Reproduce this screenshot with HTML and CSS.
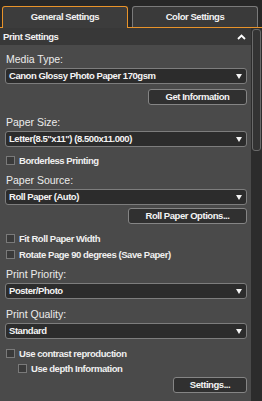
FILE: index.html
```html
<!DOCTYPE html>
<html>
    <head>
        <meta charset="utf-8">
        <title>Print Settings</title>
        <link rel="stylesheet" href="styles.css">
    </head>
    <body>
        <div class="tabs">
            <div class="tab active">General Settings</div>
            <div class="tab">Color Settings</div>
        </div>
        <div class="main">
            <div class="panel">
                <div class="section_head">
                    <span>Print Settings</span>
                    <svg class="chevron" width="9" height="6" viewBox="0 0 9 6"><path d="M1 5 L4.5 1.5 L8 5" fill="none" stroke="#fff" stroke-width="1.8"/></svg>
                </div>
                <div class="content">
                    <div class="label">Media Type:</div>
                    <div class="select">Canon Glossy Photo Paper 170gsm<span class="arrow"></span></div>
                    <div class="btn_row mt5"><div class="btn w99">Get Information</div></div>

                    <div class="label mt11">Paper Size:</div>
                    <div class="select">Letter(8.5"x11") (8.500x11.000)<span class="arrow"></span></div>
                    <div class="check mt7"><span class="box"></span>Borderless Printing</div>

                    <div class="label">Paper Source:</div>
                    <div class="select">Roll Paper (Auto)<span class="arrow"></span></div>
                    <div class="btn_row mt3"><div class="btn w119">Roll Paper Options...</div></div>
                    <div class="check"><span class="box"></span>Fit Roll Paper Width</div>
                    <div class="check mt4"><span class="box"></span>Rotate Page 90 degrees (Save Paper)</div>

                    <div class="label">Print Priority:</div>
                    <div class="select">Poster/Photo<span class="arrow"></span></div>

                    <div class="label mt9">Print Quality:</div>
                    <div class="select">Standard<span class="arrow"></span></div>
                    <div class="check"><span class="box"></span>Use contrast reproduction</div>
                    <div class="check mt3 indent"><span class="box"></span>Use depth Information</div>
                    <div class="btn_row mt3"><div class="btn w74">Settings...</div></div>
                </div>
            </div>
            <div class="scrollbar"><div class="thumb"></div></div>
        </div>
    </body>
</html>
```

FILE: styles.css
```css
body {
    margin: 0;
    width: 262px;
    height: 401px;
    overflow: hidden;
    background-color: #4a4a4a;
    font-family: "Liberation Sans", Arial, sans-serif;
    color: #ececec;
}
/* tight bold text used by the controls */
.tabs, .section_head, .select, .btn, .check {
    font-weight: bold;
    font-size: 9.5px;
    letter-spacing: -0.45px;
}
.tabs {
    display: flex;
    gap: 4px;
    padding: 6px 4px 0 2px;
    height: 21px;
    background-color: #272727;
    border-bottom: 1px solid #e8932a;
}
.tab {
    flex: 1;
    box-sizing: border-box;
    height: 21px;
    border: 1px solid #7a7a7a;
    border-bottom: none;
    border-radius: 3px 3px 0 0;
    background-color: #3a3a3a;
    text-align: center;
    line-height: 20px;
    color: #f2f2f2;
}
.tab.active {
    height: 22px;
    margin-bottom: -1px;
    border-color: #e8932a;
    background-color: #3c3c3c;
}
.main {
    display: flex;
    height: 374px;
}
.panel {
    flex: 1;
}
.section_head {
    display: flex;
    justify-content: space-between;
    align-items: center;
    height: 17px;
    padding: 0 5px 0 3px;
    background-color: #383838;
    color: #f2f2f2;
}
.chevron {
    display: block;
}
.content {
    display: flex;
    flex-direction: column;
    padding: 0 4px 0 5px;
}
.label {
    font-size: 10.5px;
    height: 13px;
    line-height: 13px;
    margin: 8px 0 2px 1px;
    color: #ececec;
}
.select {
    position: relative;
    box-sizing: border-box;
    height: 16px;
    border: 1px solid #7d7d7d;
    border-radius: 3px;
    background-color: #2c2c2c;
    line-height: 14px;
    padding-left: 3px;
    color: #f4f4f4;
}
.arrow {
    position: absolute;
    right: 4px;
    top: 5px;
    border-left: 3.5px solid transparent;
    border-right: 3.5px solid transparent;
    border-top: 5px solid #f4f4f4;
}
.btn_row {
    display: flex;
    justify-content: flex-end;
}
.btn {
    box-sizing: border-box;
    height: 16px;
    border: 1px solid #858585;
    border-radius: 3px;
    background-color: #303030;
    line-height: 14px;
    text-align: center;
    color: #f4f4f4;
}
.w99 { width: 99px; }
.w119 { width: 119px; }
.w74 { width: 74px; }
.check {
    display: flex;
    align-items: center;
    height: 12px;
    margin: 8px 0 0 1px;
    color: #f0f0f0;
}
.check.indent {
    padding-left: 12px;
}
.mt3 { margin-top: 3px; }
.mt4 { margin-top: 4px; }
.mt5 { margin-top: 5px; }
.mt7 { margin-top: 7px; }
.mt9 { margin-top: 9px; }
.mt11 { margin-top: 11px; }
.box {
    box-sizing: border-box;
    width: 9px;
    height: 9px;
    border: 1px solid #7a7a7a;
    background-color: #3a3a3a;
    margin-right: 4px;
}
.scrollbar {
    width: 11px;
    background-color: #2c2c2c;
    padding: 1px 1px 0 1px;
    box-sizing: border-box;
}
.thumb {
    height: 120px;
    border: 1px solid #6a6a6a;
    border-radius: 3px;
    background-color: #333333;
}
```
